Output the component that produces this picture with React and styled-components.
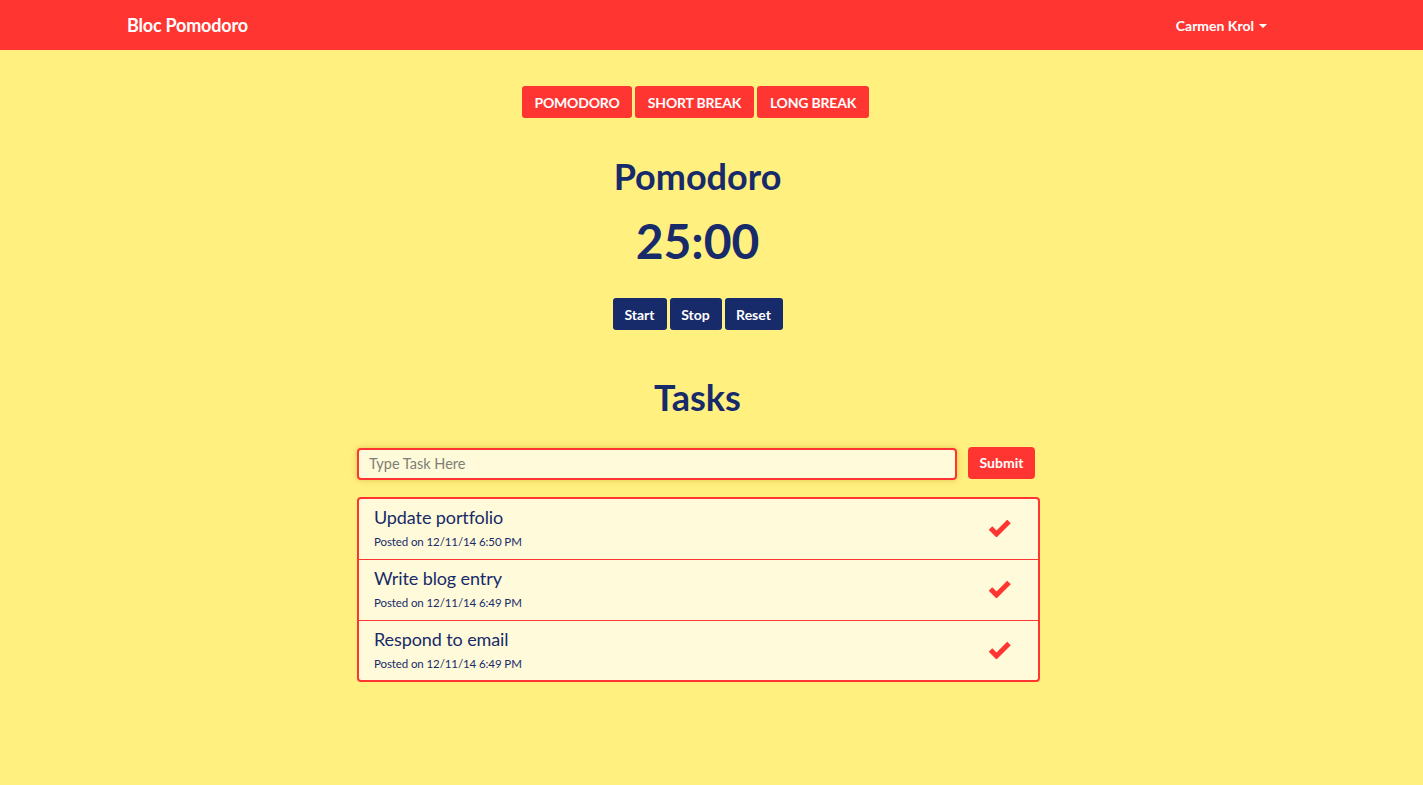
import React from "react";
import styled, { createGlobalStyle } from "styled-components";

const RED = "#ff3532";
const YELLOW = "#fff080";
const NAVY = "#172a69";
const CREAM = "#fffada";

const Global = createGlobalStyle`
  * { box-sizing: border-box; }
  html, body { margin: 0; padding: 0; }
  body {
    background: ${YELLOW};
    font-family: Lato, "Open Sans", sans-serif;
    color: ${NAVY};
    -webkit-font-smoothing: antialiased;
  }
`;

const Navbar = styled.nav`
  height: 50px;
  background: ${RED};
`;

const NavInner = styled.div`
  width: 1170px;
  height: 100%;
  margin-left: 112px;
  padding: 0 15px;
  display: flex;
  align-items: center;
  justify-content: space-between;
`;

const Brand = styled.a`
  color: #fff;
  font-size: 18px;
  font-weight: 700;
  text-decoration: none;
  letter-spacing: -0.2px;
`;

const UserMenu = styled.a`
  color: #fff;
  font-size: 14px;
  font-weight: 700;
  display: flex;
  align-items: center;
  gap: 5px;
  padding-top: 1px;
`;

const Caret = styled.span`
  display: inline-block;
  width: 0;
  height: 0;
  border-left: 4px solid transparent;
  border-right: 4px solid transparent;
  border-top: 4px solid #fff;
  margin-top: 1px;
`;

const Main = styled.main`
  width: 1395px;
  display: flex;
  flex-direction: column;
  align-items: center;
  padding-top: 36px;
`;

const ButtonRow = styled.div`
  display: flex;
  gap: 3px;
  margin-right: ${(p) => p.$shift || 0}px;
`;

const Btn = styled.button`
  height: 32px;
  padding: 0;
  border: none;
  border-radius: 3px;
  background: ${(p) => (p.$navy ? NAVY : RED)};
  color: #fff;
  font-family: Lato, sans-serif;
  font-size: 14px;
  font-weight: 700;
  white-space: nowrap;
  text-transform: ${(p) => (p.$upper ? "uppercase" : "none")};
  letter-spacing: ${(p) => (p.$upper ? "-0.2px" : "0")};
  cursor: pointer;
  width: ${(p) => (p.$w ? p.$w + "px" : "auto")};
`;

const Heading = styled.h1`
  margin: ${(p) => p.$mt}px 0 0;
  font-size: 36px;
  line-height: 1.1;
  font-weight: 700;
  color: ${NAVY};
`;

const Timer = styled.div`
  margin-top: 18px;
  font-size: 48px;
  line-height: 1.1;
  font-weight: 700;
  color: ${NAVY};
  margin-bottom: 31px;
`;

const TaskForm = styled.form`
  width: 683px;
  margin-left: 2px;
  margin-top: 29px;
  display: flex;
  align-items: flex-start;
  gap: 11px;
`;

const TaskInput = styled.input`
  width: 600px;
  height: 32px;
  margin-top: 1px;
  padding: 0 10px;
  background: ${CREAM};
  border: 2px solid ${RED};
  border-radius: 4px;
  box-shadow: 0 0 6px rgba(200, 160, 40, 0.55);
  font-family: Lato, sans-serif;
  font-size: 14.5px;
  color: ${NAVY};
  outline: none;
  &::placeholder { color: #7e7e76; }
`;

const SubmitBtn = styled(Btn)`
  width: 67px;
  border-radius: 4px;
`;

const TaskList = styled.ul`
  list-style: none;
  margin: 17px 0 0 2px;
  padding: 0;
  width: 683px;
  background: ${CREAM};
  border: 2px solid ${RED};
  border-radius: 4px;
  overflow: hidden;
`;

const TaskItem = styled.li`
  height: ${(p) => (p.$last ? 59 : 61)}px;
  padding: 8px 26px 0 15px;
  display: flex;
  justify-content: space-between;
  align-items: flex-start;
  border-bottom: ${(p) => (p.$last ? "none" : `1px solid ${RED}`)};
`;

const TaskText = styled.div`
  display: flex;
  flex-direction: column;
`;

const TaskTitle = styled.div`
  font-size: 18px;
  line-height: 21.6px;
  color: ${NAVY};
  letter-spacing: -0.1px;
`;

const TaskMeta = styled.div`
  margin-top: 5px;
  font-size: 11.5px;
  line-height: 16px;
  color: ${NAVY};
  letter-spacing: -0.1px;
`;

const Check = styled.svg`
  margin-top: 10px;
  flex: none;
`;

const CheckIcon = () => (
  <Check width="24" height="20" viewBox="0 0 24 20">
    <path
      d="M2.5 11 L8.5 17 L21 4.5"
      fill="none"
      stroke={RED}
      strokeWidth="5"
      strokeLinecap="butt"
      strokeLinejoin="miter"
    />
  </Check>
);

const tasks = [
  { title: "Update portfolio", posted: "Posted on 12/11/14 6:50 PM" },
  { title: "Write blog entry", posted: "Posted on 12/11/14 6:49 PM" },
  { title: "Respond to email", posted: "Posted on 12/11/14 6:49 PM" },
];

export default function App() {
  return (
    <>
      <Global />
      <Navbar>
        <NavInner>
          <Brand>Bloc Pomodoro</Brand>
          <UserMenu>
            Carmen Krol <Caret />
          </UserMenu>
        </NavInner>
      </Navbar>
      <Main>
        <ButtonRow $shift={4}>
          <Btn $upper $w={110}>Pomodoro</Btn>
          <Btn $upper $w={119}>Short Break</Btn>
          <Btn $upper $w={112}>Long Break</Btn>
        </ButtonRow>
        <Heading $mt={39}>Pomodoro</Heading>
        <Timer>25:00</Timer>
        <ButtonRow>
          <Btn $navy $w={54}>Start</Btn>
          <Btn $navy $w={52}>Stop</Btn>
          <Btn $navy $w={58}>Reset</Btn>
        </ButtonRow>
        <Heading $mt={48}>Tasks</Heading>
        <TaskForm onSubmit={(e) => e.preventDefault()}>
          <TaskInput placeholder="Type Task Here" />
          <SubmitBtn type="submit">Submit</SubmitBtn>
        </TaskForm>
        <TaskList>
          {tasks.map((t, i) => (
            <TaskItem key={i} $last={i === tasks.length - 1}>
              <TaskText>
                <TaskTitle>{t.title}</TaskTitle>
                <TaskMeta>{t.posted}</TaskMeta>
              </TaskText>
              <CheckIcon />
            </TaskItem>
          ))}
        </TaskList>
      </Main>
    </>
  );
}
